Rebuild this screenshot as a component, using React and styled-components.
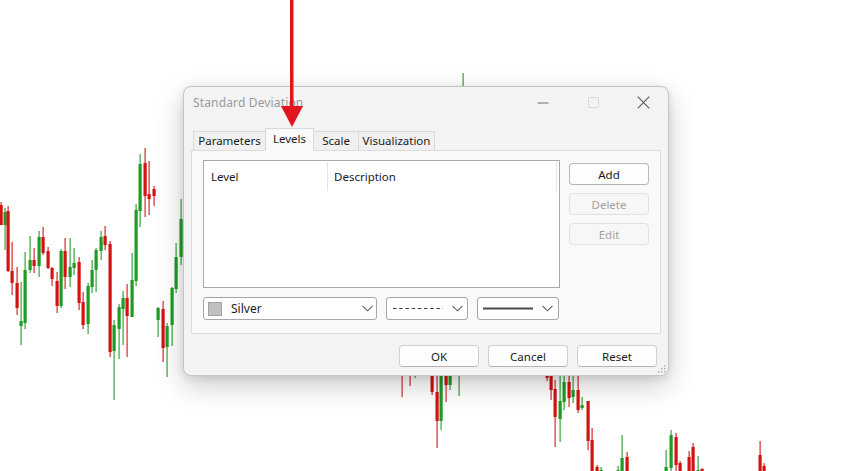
import React from 'react';
import styled, { createGlobalStyle } from 'styled-components';

const GlobalStyle = createGlobalStyle`
  html, body { margin: 0; padding: 0; background: #ffffff; }
  body { font-family: "Noto Sans", "Segoe UI", sans-serif; overflow: hidden; }
`;

const Stage = styled.div`
  position: relative;
  width: 853px;
  height: 471px;
  overflow: hidden;
  background: #ffffff;
`;

const ChartLayer = styled.svg`
  position: absolute;
  left: 0;
  top: 0;
`;

const ArrowLayer = styled.svg`
  position: absolute;
  left: 0;
  top: 0;
  z-index: 3;
  pointer-events: none;
`;

const Window = styled.div`
  position: absolute;
  left: 183px;
  top: 86px;
  width: 486px;
  height: 290px;
  box-sizing: border-box;
  background: #f3f3f3;
  border: 1px solid #c4c4c4;
  border-radius: 8px;
  box-shadow: 0 10px 28px rgba(0, 0, 0, 0.2), 0 2px 8px rgba(0, 0, 0, 0.1);
  display: flex;
  flex-direction: column;
  font-size: 11.5px;
  color: #1b1b1b;
  z-index: 2;
`;

const TitleBar = styled.div`
  display: flex;
  align-items: center;
  height: 31px;
  padding-left: 9px;
`;

const Title = styled.div`
  flex: 1;
  color: #9a9a9a;
  font-size: 12px;
  letter-spacing: 0.15px;
`;

const CaptionButton = styled.div`
  width: 50px;
  height: 30px;
  display: flex;
  align-items: center;
  justify-content: center;
`;

const Body = styled.div`
  padding: 10px 7px 0 7px;
  display: flex;
  flex-direction: column;
`;

const TabStrip = styled.div`
  display: flex;
  align-items: flex-end;
  height: 23px;
  padding-left: 2px;
  margin-bottom: -1px;
  position: relative;
  z-index: 1;
`;

const Tab = styled.div`
  box-sizing: border-box;
  width: ${(p) => p.$w}px;
  height: ${(p) => (p.$active ? 23 : 20)}px;
  padding-bottom: ${(p) => (p.$active ? 3 : 1)}px;
  margin-left: ${(p) => (p.$first ? 0 : -1)}px;
  display: flex;
  align-items: center;
  justify-content: center;
  border: 1px solid #d9d9d9;
  border-bottom: ${(p) => (p.$active ? '1px solid #f9f9f9' : '1px solid #dcdcdc')};
  background: ${(p) => (p.$active ? '#f9f9f9' : '#f0f0f0')};
  color: #1b1b1b;
  position: relative;
  z-index: ${(p) => (p.$active ? 2 : 1)};
  white-space: nowrap;
`;

const Panel = styled.div`
  box-sizing: border-box;
  height: 184px;
  border: 1px solid #dcdcdc;
  background: #f9f9f9;
  padding: 9px 11px;
  display: flex;
  flex-direction: column;
`;

const TopRow = styled.div`
  display: flex;
  gap: 9px;
`;

const ListBox = styled.div`
  box-sizing: border-box;
  width: 357px;
  height: 128px;
  border: 1px solid #a9a9a9;
  background: #ffffff;
`;

const ListHeader = styled.div`
  display: flex;
  height: 29px;
  padding-top: 1px;
`;

const HeaderCell = styled.div`
  box-sizing: border-box;
  width: ${(p) => p.$w}px;
  padding-left: ${(p) => p.$pad}px;
  display: flex;
  align-items: center;
  border-right: 1px solid #e3e3e3;
  color: #1b1b1b;
`;

const SideButtons = styled.div`
  display: flex;
  flex-direction: column;
  gap: 8px;
  padding-top: 3px;
`;

const Button = styled.div`
  box-sizing: border-box;
  width: 80px;
  height: 22px;
  display: flex;
  align-items: center;
  justify-content: center;
  border-radius: 4px;
  border: 1px solid ${(p) => (p.$disabled ? '#e2e2e2' : p.$strong ? '#b9b9b9' : '#d0d0d0')};
  border-bottom-color: ${(p) => (p.$disabled ? '#e2e2e2' : '#b4b4b4')};
  background: ${(p) => (p.$disabled ? '#f7f7f7' : '#fdfdfd')};
  color: ${(p) => (p.$disabled ? '#a2a2a2' : '#1b1b1b')};
`;

const SelectRow = styled.div`
  display: flex;
  gap: 9px;
  margin-top: 9px;
`;

const Select = styled.div`
  box-sizing: border-box;
  width: ${(p) => p.$w}px;
  height: 23px;
  display: flex;
  align-items: center;
  padding: 0 ${(p) => p.$right}px 0 ${(p) => p.$left}px;
  border: 1px solid #a6a6a6;
  border-radius: 3px;
  background: #ffffff;
`;

const Swatch = styled.div`
  box-sizing: border-box;
  width: 14px;
  height: 14px;
  background: #c0c0c0;
  border: 1px solid #a3a3a3;
  margin-right: 9px;
`;

const SelectText = styled.div`
  flex: 1;
  color: #1b1b1b;
  font-size: 12px;
`;

const LineSample = styled.svg`
  width: 50px;
  margin-right: auto;
`;

const Footer = styled.div`
  display: flex;
  justify-content: flex-end;
  gap: 9px;
  padding: 11px 4px 0 0;
`;

const Grip = styled.svg`
  position: absolute;
  right: 2px;
  bottom: 2px;
`;

const Chevron = () => (
  <svg width="11" height="7" viewBox="0 0 11 7">
    <path d="M0.5 0.8 L5.5 5.8 L10.5 0.8" fill="none" stroke="#5f5f5f" strokeWidth="1.1" />
  </svg>
);

const RED = '#d31212';
const GREEN = '#1f9b25';

// [x, wickTop, wickBottom, bodyTop, bodyBottom, colour]
const candles = [
  [1, 202, 225, 205, 225, 'r'],
  [5, 208, 250, 212, 225, 'g'],
  [8, 206, 272, 211, 271, 'r'],
  [12, 242, 295, 271, 283, 'r'],
  [17, 267, 315, 283, 308, 'r'],
  [21, 282, 345, 321, 326, 'g'],
  [25, 252, 329, 270, 323, 'g'],
  [30, 236, 273, 260, 270, 'g'],
  [34, 248, 273, 260, 266, 'r'],
  [39, 231, 277, 237, 266, 'g'],
  [43, 227, 255, 237, 253, 'r'],
  [48, 247, 269, 251, 268, 'r'],
  [52, 267, 286, 268, 279, 'r'],
  [57, 272, 313, 281, 306, 'r'],
  [61, 249, 308, 251, 306, 'g'],
  [65, 238, 289, 251, 277, 'r'],
  [70, 238, 287, 267, 277, 'g'],
  [74, 248, 275, 263, 268, 'g'],
  [79, 257, 310, 262, 303, 'r'],
  [83, 292, 329, 302, 325, 'r'],
  [88, 283, 334, 286, 324, 'g'],
  [92, 260, 293, 270, 287, 'g'],
  [96, 248, 292, 250, 270, 'g'],
  [101, 231, 260, 237, 251, 'g'],
  [105, 226, 250, 236, 245, 'r'],
  [110, 241, 357, 244, 352, 'r'],
  [114, 320, 400, 325, 351, 'g'],
  [119, 304, 359, 307, 329, 'g'],
  [123, 291, 345, 298, 309, 'g'],
  [127, 284, 357, 298, 316, 'r'],
  [132, 253, 317, 280, 317, 'g'],
  [136, 204, 286, 210, 281, 'g'],
  [140, 154, 227, 164, 211, 'g'],
  [145, 148, 217, 163, 196, 'r'],
  [149, 161, 215, 194, 199, 'r'],
  [154, 186, 206, 189, 196, 'r'],
  [158, 307, 337, 308, 320, 'g'],
  [163, 301, 362, 309, 348, 'r'],
  [167, 323, 377, 326, 347, 'g'],
  [172, 287, 346, 288, 325, 'g'],
  [176, 243, 293, 257, 289, 'g'],
  [181, 199, 265, 219, 257, 'g'],
  [463, 73, 120, 90, 110, 'g'],
  [402, 360, 397, 360, 372, 'r'],
  [410, 360, 386, 360, 372, 'r'],
  [415, 360, 378, 360, 372, 'g'],
  [432, 365, 395, 370, 392, 'r'],
  [437, 370, 448, 392, 421, 'r'],
  [441, 365, 430, 375, 421, 'g'],
  [446, 365, 402, 370, 385, 'r'],
  [450, 365, 390, 370, 385, 'g'],
  [459, 360, 396, 360, 372, 'g'],
  [547, 370, 381, 372, 378, 'r'],
  [551, 365, 400, 376, 390, 'r'],
  [555, 380, 447, 389, 417, 'r'],
  [560, 370, 442, 401, 419, 'g'],
  [564, 370, 410, 382, 402, 'g'],
  [569, 370, 407, 382, 398, 'r'],
  [573, 370, 403, 390, 397, 'g'],
  [578, 370, 413, 390, 410, 'r'],
  [582, 397, 410, 405, 408, 'g'],
  [588, 401, 450, 401, 441, 'r'],
  [592, 428, 480, 440, 480, 'r'],
  [597, 465, 480, 467, 480, 'r'],
  [601, 467, 480, 470, 480, 'g'],
  [618, 466, 480, 470, 480, 'g'],
  [622, 435, 480, 458, 480, 'g'],
  [627, 452, 480, 457, 480, 'r'],
  [666, 450, 480, 467, 480, 'g'],
  [671, 430, 480, 435, 468, 'g'],
  [676, 433, 480, 437, 465, 'r'],
  [680, 461, 480, 463, 480, 'r'],
  [689, 451, 480, 457, 480, 'r'],
  [693, 443, 480, 447, 480, 'r'],
  [698, 456, 480, 470, 480, 'g'],
  [702, 468, 480, 469, 480, 'r'],
  [760, 441, 480, 455, 480, 'r'],
  [764, 463, 480, 466, 480, 'r'],
];

const Chart = () => (
  <ChartLayer width="853" height="471" viewBox="0 0 853 471">
    {candles.map(([x, wt, wb, bt, bb, c], i) => {
      const col = c === 'r' ? RED : GREEN;
      return (
        <g key={i}>
          <rect x={x - 0.5} y={wt} width="1.2" height={wb - wt} fill={col} opacity="0.9" />
          <rect x={x - 1.5} y={bt} width="3.2" height={Math.max(bb - bt, 2)} fill={col} />
        </g>
      );
    })}
  </ChartLayer>
);

const Arrow = () => (
  <ArrowLayer width="853" height="471" viewBox="0 0 853 471">
    <rect x="290" y="0" width="3.5" height="110" fill="#e1151d" />
    <polygon points="281,106 303,106 292,127" fill="#e1151d" />
  </ArrowLayer>
);

export default function App() {
  return (
    <Stage>
      <GlobalStyle />
      <Chart />
      <Window>
        <TitleBar>
          <Title>Standard Deviation</Title>
          <CaptionButton>
            <svg width="12" height="2" viewBox="0 0 12 2">
              <rect x="0.5" y="0.5" width="11" height="1" fill="#6a6a6a" />
            </svg>
          </CaptionButton>
          <CaptionButton>
            <svg width="11" height="11" viewBox="0 0 11 11">
              <rect x="0.5" y="0.5" width="10" height="10" rx="1" fill="none" stroke="#d6d6d6" />
            </svg>
          </CaptionButton>
          <CaptionButton>
            <svg width="13" height="13" viewBox="0 0 13 13">
              <path d="M0.7 0.7 L12.3 12.3 M12.3 0.7 L0.7 12.3" stroke="#5c5c5c" strokeWidth="1.1" />
            </svg>
          </CaptionButton>
        </TitleBar>
        <Body>
          <TabStrip>
            <Tab $first $w={73}>Parameters</Tab>
            <Tab $active $w={49}>Levels</Tab>
            <Tab $w={46}>Scale</Tab>
            <Tab $w={77}>Visualization</Tab>
          </TabStrip>
          <Panel>
            <TopRow>
              <ListBox>
                <ListHeader>
                  <HeaderCell $w={124} $pad={7}>Level</HeaderCell>
                  <HeaderCell $w={229} $pad={6}>Description</HeaderCell>
                </ListHeader>
              </ListBox>
              <SideButtons>
                <Button $strong>Add</Button>
                <Button $disabled>Delete</Button>
                <Button $disabled>Edit</Button>
              </SideButtons>
            </TopRow>
            <SelectRow>
              <Select $w={174} $left={4} $right={3}>
                <Swatch />
                <SelectText>Silver</SelectText>
                <Chevron />
              </Select>
              <Select $w={82} $left={6} $right={4}>
                <LineSample height="3" viewBox="0 0 50 3" preserveAspectRatio="none">
                  <line x1="0" y1="1.5" x2="50" y2="1.5" stroke="#3a3a3a" strokeWidth="1.2" strokeDasharray="3.5 2.7" />
                </LineSample>
                <Chevron />
              </Select>
              <Select $w={82} $left={5} $right={5}>
                <LineSample height="3" viewBox="0 0 50 3" preserveAspectRatio="none">
                  <line x1="0" y1="1.5" x2="50" y2="1.5" stroke="#4a4a4a" strokeWidth="2" />
                </LineSample>
                <Chevron />
              </Select>
            </SelectRow>
          </Panel>
          <Footer>
            <Button>OK</Button>
            <Button>Cancel</Button>
            <Button>Reset</Button>
          </Footer>
        </Body>
        <Grip width="8" height="8" viewBox="0 0 8 8">
          <rect x="6" y="0" width="1.5" height="1.5" fill="#b0b0b0" />
          <rect x="3" y="3" width="1.5" height="1.5" fill="#b0b0b0" />
          <rect x="6" y="3" width="1.5" height="1.5" fill="#b0b0b0" />
          <rect x="0" y="6" width="1.5" height="1.5" fill="#b0b0b0" />
          <rect x="3" y="6" width="1.5" height="1.5" fill="#b0b0b0" />
          <rect x="6" y="6" width="1.5" height="1.5" fill="#b0b0b0" />
        </Grip>
      </Window>
      <Arrow />
    </Stage>
  );
}
